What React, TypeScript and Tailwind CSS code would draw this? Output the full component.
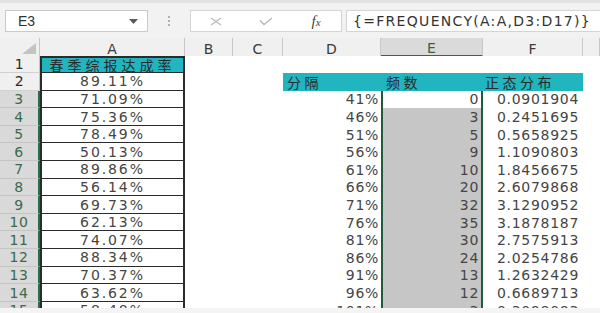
import React from "react";

const aVals = [
  "89.11%", "71.09%", "75.36%", "78.49%", "50.13%", "89.86%", "56.14%",
  "69.73%", "62.13%", "74.07%", "88.34%", "70.37%", "63.62%", "58.48%",
];
const dVals = ["41%", "46%", "51%", "56%", "61%", "66%", "71%", "76%", "81%", "86%", "91%", "96%", "101%"];
const eVals = ["0", "3", "5", "9", "10", "20", "32", "35", "30", "24", "13", "12", "3"];
const fVals = [
  "0.0901904", "0.2451695", "0.5658925", "1.1090803", "1.8456675", "2.6079868", "3.1290952",
  "3.1878187", "2.7575913", "2.0254786", "1.2632429", "0.6689713", "0.3098083",
];

const gridCols = "grid grid-cols-[40px_145px_48px_50px_98px_102px_100px_1fr]";
const cellFont = "font-['DejaVu_Sans',sans-serif] text-[14px] tracking-[0.7px] text-[#454545] leading-none";
const cjk = "font-['Noto_Sans_CJK_SC',sans-serif] text-[14px] leading-none text-[#2a2a2a]";

function Row({ n }: { n: number }) {
  const selected = n >= 3;
  const rowHeader = selected
    ? "bg-[#d9d9d9] text-[#3b6a4b] border-r-2 border-r-[#217346] border-b border-b-[#c4c4c4]"
    : "bg-[#f0f0f0] text-[#2a2a2a] border-r border-r-[#c4c4c4] border-b border-b-[#d0d0d0]";
  const di = n - 3;
  return (
    <div className={`${gridCols} h-[17.6px] shrink-0`}>
      <div className={`${rowHeader} flex items-center justify-center font-['DejaVu_Sans',sans-serif] text-[14px] tracking-[0.6px] leading-none`}>
        {n}
      </div>
      {n === 1 ? (
        <div className="bg-[#21b5c0] border-2 border-b border-[#2b2b2b] flex items-center justify-center">
          <span className={`${cjk} tracking-[4px]`}>春季综报达成率</span>
        </div>
      ) : (
        <div className="bg-white border-x-2 border-b border-[#2b2b2b] flex items-center justify-center">
          <span className="font-['DejaVu_Sans',sans-serif] text-[14px] tracking-[1.9px] text-[#454545] leading-none">
            {aVals[n - 2]}
          </span>
        </div>
      )}
      <div className="bg-white" />
      <div className="bg-white" />
      {n === 1 ? (
        <>
          <div className="bg-white" />
          <div className="bg-white" />
          <div className="bg-white" />
        </>
      ) : n === 2 ? (
        <>
          <div className="bg-[#21b5c0] flex items-center pl-[4px]">
            <span className={`${cjk} tracking-[3.5px]`}>分隔</span>
          </div>
          <div className="bg-[#21b5c0] flex items-center pl-[5px]">
            <span className={`${cjk} tracking-[3.5px]`}>频数</span>
          </div>
          <div className="bg-[#21b5c0] flex items-center pl-[2px]">
            <span className={`${cjk} tracking-[3.5px]`}>正态分布</span>
          </div>
        </>
      ) : (
        <>
          <div className="bg-white flex items-center justify-end pr-[2px]">
            <span className={cellFont}>{dVals[di]}</span>
          </div>
          <div
            className={`${n === 3 ? "bg-white" : "bg-[#c6c6c6]"} border-x-2 border-[#1f5c3b] flex items-center justify-end pr-[2px]`}
          >
            <span className={cellFont}>{eVals[di]}</span>
          </div>
          <div className="bg-white flex items-center justify-end pr-[4px]">
            <span className={cellFont}>{fVals[di]}</span>
          </div>
        </>
      )}
      <div className="bg-white" />
    </div>
  );
}

function ColHead({ label, sel }: { label: string; sel?: boolean }) {
  return (
    <div
      className={`${sel ? "bg-[#dadada] border-b-2 border-b-[#217346] text-[#3a5f47]" : "bg-[#f0f0f0] border-b border-b-[#c8c8c8] text-[#3a3a3a]"} border-r border-r-[#c8c8c8] flex items-center justify-center font-['DejaVu_Sans',sans-serif] text-[14px] leading-none pt-[3px]`}
    >
      {label}
    </div>
  );
}

export default function App() {
  return (
    <div className="w-[600px] h-[313px] overflow-hidden bg-white flex flex-col">
      {/* toolbar */}
      <div className="h-[38px] shrink-0 bg-[#f2f2f2] border-t-[3px] border-t-[#e2e2e2] flex items-start pt-[7px]">
        <div className="ml-[5px] w-[143px] h-[22px] bg-white border border-[#cacaca] flex items-center justify-between pl-[12px] pr-[9px]">
          <span className="font-['Liberation_Sans',sans-serif] text-[14px] text-[#333] leading-none">E3</span>
          <svg width="9" height="5" viewBox="0 0 9 5">
            <path d="M0 0 L9 0 L4.5 5 Z" fill="#5a5a5a" />
          </svg>
        </div>
        <div className="w-[42px] h-[22px] flex flex-col items-center justify-center gap-[2px]">
          <div className="w-[2px] h-[2px] rounded-full bg-[#9a9a9a]" />
          <div className="w-[2px] h-[2px] rounded-full bg-[#9a9a9a]" />
          <div className="w-[2px] h-[2px] rounded-full bg-[#9a9a9a]" />
        </div>
        <div className="w-[152px] h-[22px] bg-white border border-[#d4d4d4] flex items-center">
          <div className="flex-1 flex justify-center">
            <svg width="12" height="9" viewBox="0 0 12 9">
              <path d="M1 1 L11 8 M11 1 L1 8" stroke="#b9b9b9" strokeWidth="1.2" fill="none" />
            </svg>
          </div>
          <div className="flex-1 flex justify-center">
            <svg width="14" height="9" viewBox="0 0 14 9">
              <path d="M1 3.5 L5 7.5 L13 1" stroke="#b9b9b9" strokeWidth="1.4" fill="none" />
            </svg>
          </div>
          <div className="flex-1 flex justify-center">
            <span className="font-['Liberation_Serif',serif] italic text-[15px] text-[#444] leading-none">
              f<span className="text-[11px]">x</span>
            </span>
          </div>
        </div>
        <div className="ml-[4px] flex-1 h-[22px] bg-white border border-r-0 border-[#d4d4d4] flex items-center pl-[6px]">
          <span className="font-['DejaVu_Sans',sans-serif] text-[14px] tracking-[1.3px] text-[#333] leading-none">
            {"{=FREQUENCY(A:A,D3:D17)}"}
          </span>
        </div>
      </div>

      {/* grid */}
      <div className="h-[270px] shrink-0 overflow-hidden flex flex-col">
        <div className={`${gridCols} h-[17.5px] shrink-0`}>
          <div className="bg-[#f0f0f0] border-r border-r-[#c8c8c8] border-b border-b-[#c8c8c8] flex items-end justify-end pr-[3px] pb-[2px]">
            <svg width="14" height="11" viewBox="0 0 14 11">
              <path d="M14 0 L14 11 L0 11 Z" fill="#c3c3c3" />
            </svg>
          </div>
          <ColHead label="A" />
          <ColHead label="B" />
          <ColHead label="C" />
          <ColHead label="D" />
          <ColHead label="E" sel />
          <ColHead label="F" />
          <ColHead label="" />
        </div>
        {Array.from({ length: 15 }, (_, i) => (
          <Row key={i} n={i + 1} />
        ))}
      </div>

      <div className="flex-1 bg-[#f4f4f4]" />
    </div>
  );
}
